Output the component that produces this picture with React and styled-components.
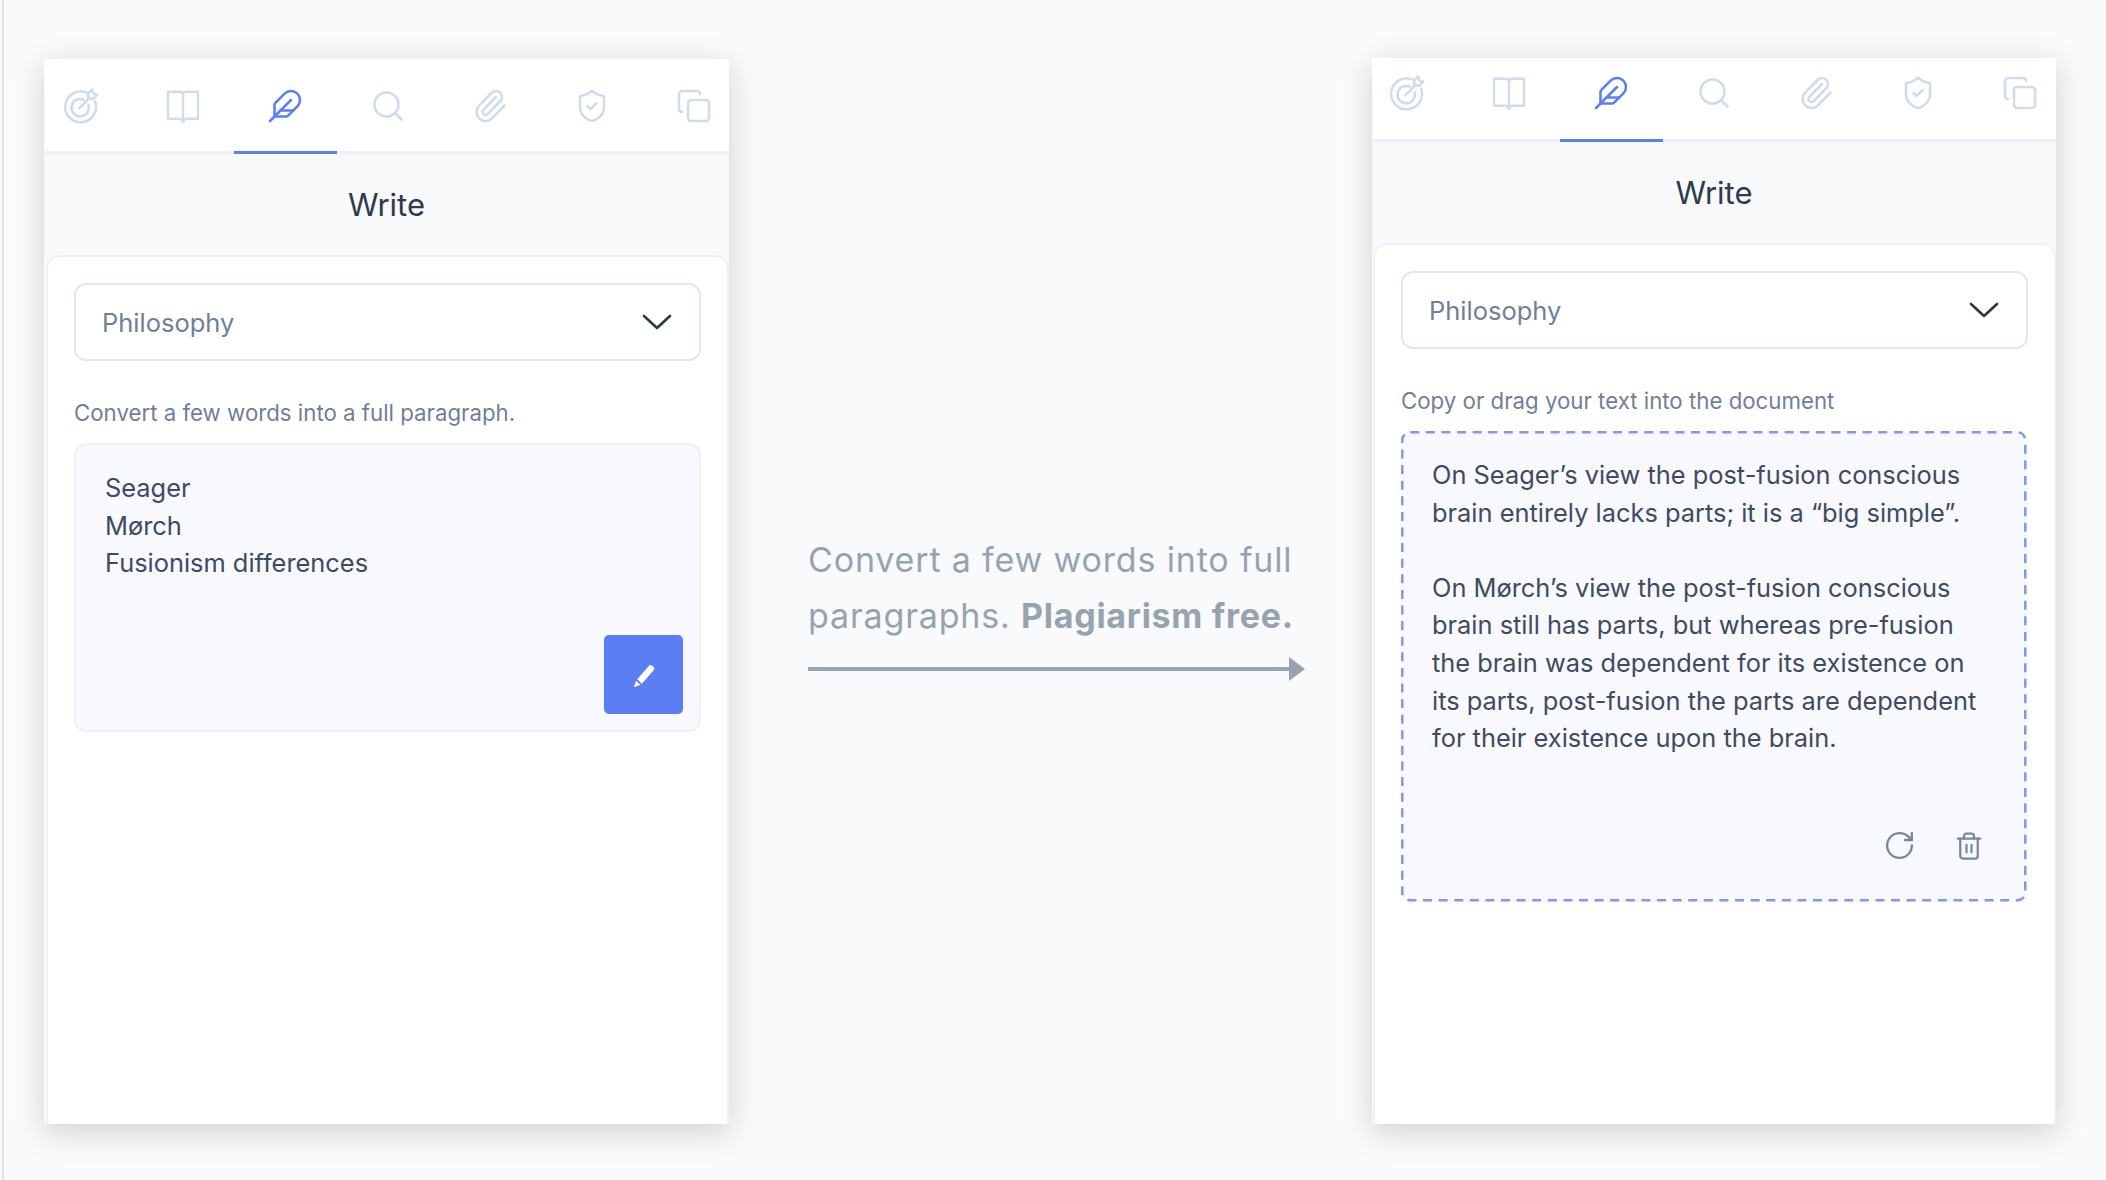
import React from 'react';
import styled, { createGlobalStyle } from 'styled-components';
import { Feather, Search, Paperclip, ShieldCheck, Copy, RotateCw, Trash2 } from 'lucide-react';

const GlobalStyle = createGlobalStyle`
  html, body {
    margin: 0;
    padding: 0;
    background: #f9f9fb;
    font-family: Inter, "Liberation Sans", sans-serif;
  }
`;

const Page = styled.div`
  box-sizing: border-box;
  width: 2104px;
  height: 1180px;
  margin-left: 2px;
  border-left: 2px solid #e3e3e7;
  background: #f9fafc;
  display: flex;
  align-items: flex-end;
  padding: 0 46px 56px 40px;
  overflow: hidden;
`;

const Panel = styled.section`
  box-sizing: border-box;
  flex: none;
  width: ${(p) => p.$width}px;
  height: ${(p) => p.$height}px;
  background: #f8f9fb;
  box-shadow: 0 8px 30px rgba(0, 0, 0, 0.17);
  display: flex;
  flex-direction: column;
`;

const TabBar = styled.nav`
  flex: none;
  height: ${(p) => p.$height}px;
  background: #fff;
  border-bottom: 3px solid #eef0f6;
  box-sizing: border-box;
`;

const TabRow = styled.div`
  display: grid;
  grid-template-columns: repeat(7, 102.2px);
  height: 100%;
  margin-left: ${(p) => p.$shift}px;
`;

const Tab = styled.div`
  position: relative;
  display: flex;
  justify-content: center;
  align-items: flex-start;
  padding-top: ${(p) => p.$top}px;
  color: ${(p) => (p.$active ? '#5b7ef5' : '#cfdcea')};

  &::after {
    content: '';
    display: ${(p) => (p.$active ? 'block' : 'none')};
    position: absolute;
    left: 0;
    right: 0;
    bottom: -3px;
    height: 3px;
    background: #5b7ef5;
  }
`;

const Title = styled.h2`
  flex: none;
  margin: 0;
  height: 101px;
  display: flex;
  align-items: center;
  justify-content: center;
  font-size: 31px;
  font-weight: 400;
  color: #2f3a4c;
`;

const Card = styled.div`
  box-sizing: border-box;
  flex: 1;
  margin-left: ${(p) => p.$inset}px;
  background: #fff;
  border: 2px solid #eef1f7;
  border-bottom: none;
  border-radius: 14px 14px 0 0;
  padding: 26px 26px 0;
  display: flex;
  flex-direction: column;
`;

const Select = styled.div`
  box-sizing: border-box;
  height: 78px;
  border: 2px solid #e2e8f0;
  border-radius: 12px;
  padding: 0 27px 0 26px;
  display: flex;
  align-items: center;
  justify-content: space-between;
  font-size: 25.5px;
  color: #718096;
`;

const Helper = styled.p`
  margin: 37px 0 15px;
  line-height: 30px;
  font-size: 22.25px;
  color: #718096;
`;

const InputBox = styled.div`
  box-sizing: border-box;
  height: 289px;
  background: #f7f9fe;
  border: 2px solid #eef1f6;
  border-radius: 12px;
  padding: 24px 16px 16px 29px;
  display: flex;
  flex-direction: column;
  justify-content: space-between;
`;

const OutputBox = styled.div`
  position: relative;
  box-sizing: border-box;
  height: 471px;
  background: #f8f9fe;
  border-radius: 8px;
  padding: 25px 44px 40px 31px;
  display: flex;
  flex-direction: column;
  justify-content: space-between;
`;

const DashedEdge = styled.svg`
  position: absolute;
  inset: 0;
  width: 100%;
  height: 100%;
  pointer-events: none;
`;

const BodyText = styled.div`
  font-size: 25.4px;
  line-height: 37.6px;
  color: #404b5e;
  white-space: nowrap;
`;

const Gap = styled.div`
  height: 37.6px;
`;

const ActionRow = styled.div`
  display: flex;
  justify-content: flex-end;
  align-items: center;
  gap: ${(p) => p.$gap || 0}px;
`;

const WriteButton = styled.button`
  width: 79px;
  height: 79px;
  border: none;
  border-radius: 5px;
  background: #5b7ef5;
  display: flex;
  align-items: center;
  justify-content: center;
  padding: 0;
`;

const IconAction = styled.span`
  display: flex;
  color: #77889c;
`;

const Middle = styled.div`
  flex: none;
  width: 498px;
  margin: 0 66px 0 79px;
  align-self: flex-start;
  padding-top: 532px;
`;

const Pitch = styled.p`
  margin: 0;
  font-size: 34px;
  line-height: 56px;
  letter-spacing: 0.83px;
  color: #97a3ae;
  white-space: nowrap;

  strong {
    font-weight: 700;
    letter-spacing: 0.72px;
  }
`;

const ArrowLine = styled.div`
  position: relative;
  width: 481px;
  height: 4px;
  margin-top: 23px;
  background: #97a3ae;

  &::after {
    content: '';
    position: absolute;
    left: 481px;
    top: -10px;
    border-left: 16px solid #97a3ae;
    border-top: 12px solid transparent;
    border-bottom: 12px solid transparent;
  }
`;

const TargetIcon = () => (
  <svg width="36" height="36" viewBox="0 0 24 24" fill="none" stroke="currentColor" strokeWidth="1.7" strokeLinecap="round" strokeLinejoin="round">
    <path d="M16.800 3.600A10.300 10.300 0 1 0 21.400 9" />
    <path d="M13.800 7.800A5.800 5.800 0 1 0 17 11.400" />
    <path d="M11 13.400 18 6.200" />
    <path d="M16.800 7.200V3.600L19.400 1l.8 2.600 2.600.8-2.800 2.800z" />
  </svg>
);

const BookIcon = () => (
  <svg width="36" height="36" viewBox="0 0 24 24" fill="none" stroke="currentColor" strokeWidth="1.6" strokeLinejoin="round">
    <path d="M2 2.500h8c1.200 0 2 .8 2 2 0-1.200.8-2 2-2h8v18h-8.500L12 22.500l-1.500-2H2z" />
    <path d="M12 4.500v18" />
  </svg>
);

const ChevronIcon = () => (
  <svg width="30" height="16" viewBox="0 0 30 16" fill="none" stroke="#2d3748" strokeWidth="2.6" strokeLinecap="round" strokeLinejoin="round">
    <path d="M2 2l13 12L28 2" />
  </svg>
);

const PencilIcon = () => (
  <svg width="26" height="26" viewBox="0 0 24 24" fill="#fff">
    <path d="M5.800 15.900 16.600 3.400c.7-.8 1.800-.9 2.600-.2l1.700 1.500c.8.7.9 1.800.2 2.600L10 20z" />
    <path d="M4.600 17.400 8.800 21 2.600 23.400z" />
  </svg>
);

const tabIcons = [TargetIcon, BookIcon, Feather, Search, Paperclip, ShieldCheck, Copy];

const Tabs = ({ height, shift, top }) => (
  <TabBar $height={height}>
    <TabRow $shift={shift}>
      {tabIcons.map((Icon, i) => (
        <Tab key={i} $active={i === 2} $top={top}>
          <Icon size={36} strokeWidth={1.7} />
        </Tab>
      ))}
    </TabRow>
  </TabBar>
);

export default function App() {
  return (
    <>
      <GlobalStyle />
      <Page>
        <Panel $width={685} $height={1065}>
          <Tabs height={95} shift={-14} top={29} />
          <Title>Write</Title>
          <Card $inset={2}>
            <Select>
              Philosophy
              <ChevronIcon />
            </Select>
            <Helper>Convert a few words into a full paragraph.</Helper>
            <InputBox>
              <BodyText>
                Seager
                <br />
                Mørch
                <br />
                Fusionism differences
              </BodyText>
              <ActionRow>
                <WriteButton>
                  <PencilIcon />
                </WriteButton>
              </ActionRow>
            </InputBox>
          </Card>
        </Panel>
        <Middle>
          <Pitch>
            Convert a few words into full
            <br />
            paragraphs. <strong>Plagiarism free.</strong>
          </Pitch>
          <ArrowLine />
        </Middle>
        <Panel $width={684} $height={1066}>
          <Tabs height={84} shift={-16} top={17} />
          <Title>Write</Title>
          <Card $inset={1}>
            <Select>
              Philosophy
              <ChevronIcon />
            </Select>
            <Helper>Copy or drag your text into the document</Helper>
            <OutputBox>
              <DashedEdge>
                <rect x="1.25" y="1.25" width="623" height="468" rx="8" fill="none" stroke="#7f97f5" strokeWidth="2.5" strokeDasharray="9 6.6" />
              </DashedEdge>
              <BodyText>
                On Seager’s view the post-fusion conscious
                <br />
                brain entirely lacks parts; it is a “big simple”.
                <Gap />
                On Mørch’s view the post-fusion conscious
                <br />
                brain still has parts, but whereas pre-fusion
                <br />
                the brain was dependent for its existence on
                <br />
                its parts, post-fusion the parts are dependent
                <br />
                for their existence upon the brain.
              </BodyText>
              <ActionRow $gap={38}>
                <IconAction>
                  <RotateCw size={33} strokeWidth={1.7} />
                </IconAction>
                <IconAction>
                  <Trash2 size={30} strokeWidth={1.8} />
                </IconAction>
              </ActionRow>
            </OutputBox>
          </Card>
        </Panel>
      </Page>
    </>
  );
}
